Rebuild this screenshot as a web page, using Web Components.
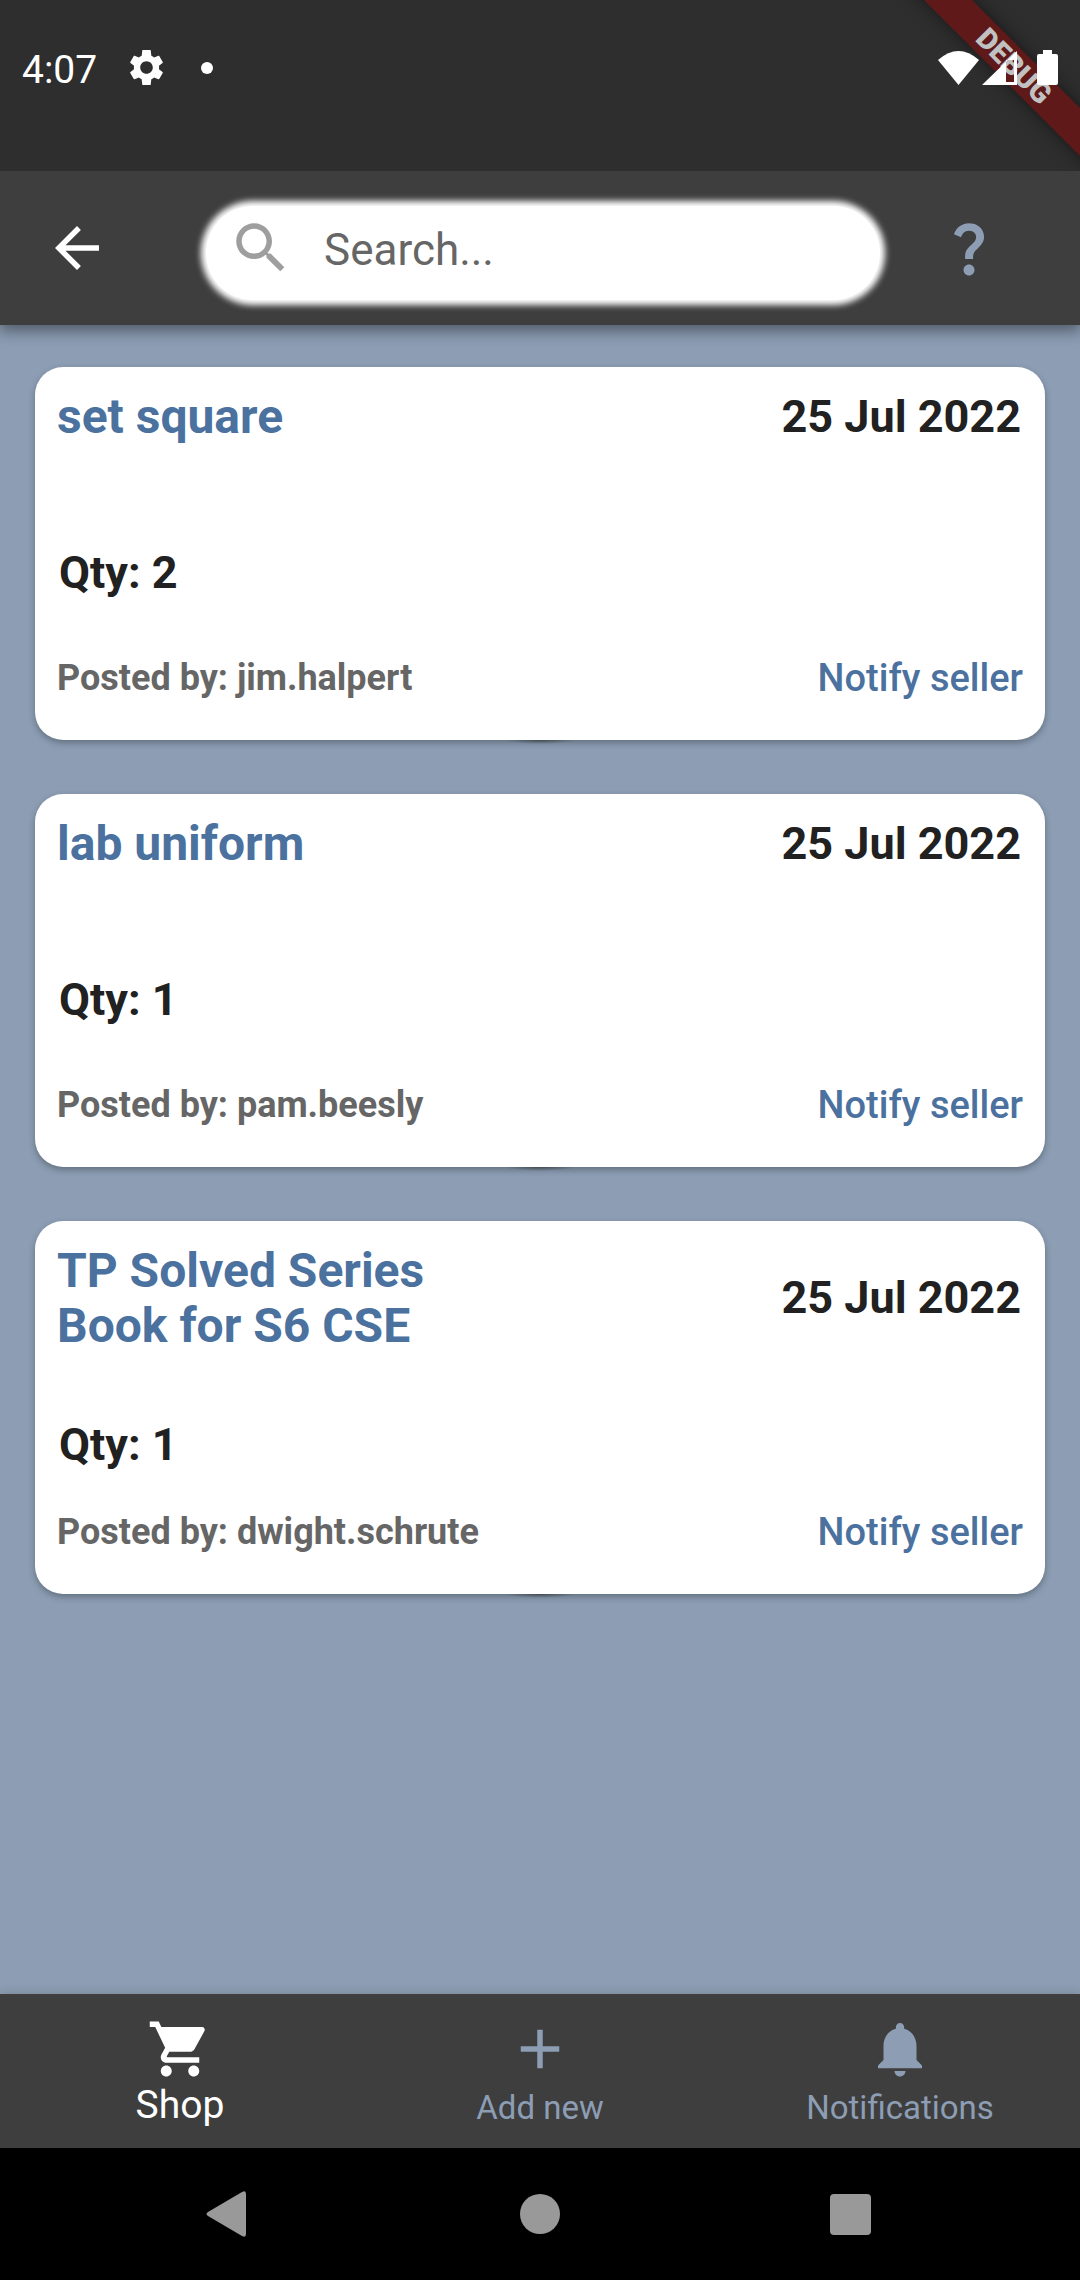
<!DOCTYPE html>
<html lang="en">
<head>
<meta charset="utf-8">
<meta name="viewport" content="width=device-width, initial-scale=1">
<title>Shop</title>
<style>
  html, body { margin: 0; height: 100%; }
  body { background: #8c9db4; font-family: Roboto, "Liberation Sans", sans-serif; color: #212121; }
</style>
</head>
<body>
<shop-app>
  <status-bar slot="status" time="4:07"></status-bar>
  <search-bar slot="header" placeholder="Search..."></search-bar>
  <item-card date="25 Jul 2022" qty="2" seller="jim.halpert">set square</item-card>
  <item-card date="25 Jul 2022" qty="1" seller="pam.beesly">lab uniform</item-card>
  <item-card date="25 Jul 2022" qty="1" seller="dwight.schrute">TP Solved Series Book for S6 CSE</item-card>
  <tab-bar slot="tabs">
    <tab-item icon="cart" active>Shop</tab-item>
    <tab-item icon="plus">Add new</tab-item>
    <tab-item icon="bell">Notifications</tab-item>
  </tab-bar>
  <system-nav slot="system"></system-nav>
</shop-app>
<script>
const ICONS = {
  back: '<path d="M20 11H7.83l5.59-5.59L12 4l-8 8 8 8 1.41-1.41L7.83 13H20v-2z"/>',
  search: '<path d="M15.5 14h-.79l-.28-.27C15.41 12.59 16 11.11 16 9.5 16 5.91 13.09 3 9.5 3S3 5.91 3 9.5 5.91 16 9.5 16c1.61 0 3.09-.59 4.23-1.57l.27.28v.79l5 4.99L20.49 19l-4.99-5zm-6 0C7.01 14 5 11.99 5 9.5S7.01 5 9.5 5 14 7.01 14 9.5 11.99 14 9.5 14z"/>',
  help: '<path d="M11.07 12.85c.77-1.39 2.25-2.21 3.11-3.44.91-1.29.4-3.7-2.18-3.7-1.69 0-2.52 1.28-2.87 2.34L6.54 6.96C7.25 4.83 9.18 3 11.99 3c2.35 0 3.96 1.07 4.78 2.41.7 1.15 1.11 3.3.03 4.9-1.2 1.77-2.35 2.31-2.97 3.45-.25.46-.35.76-.35 2.24h-2.89c-.01-.78-.13-2.05.48-3.15zM14 20c0 1.1-.9 2-2 2s-2-.9-2-2 .9-2 2-2 2 .9 2 2z"/>',
  cart: '<path d="M7 18c-1.1 0-1.99.9-1.99 2S5.9 22 7 22s2-.9 2-2-.9-2-2-2zM1 2v2h2l3.6 7.59-1.35 2.45c-.16.28-.25.61-.25.96 0 1.1.9 2 2 2h12v-2H7.42c-.14 0-.25-.11-.25-.25l.03-.12.9-1.63h7.45c.75 0 1.41-.41 1.75-1.03l3.58-6.49c.08-.14.12-.31.12-.48 0-.55-.45-1-1-1H5.21l-.94-2H1zm16 16c-1.1 0-1.99.9-1.99 2s.89 2 1.99 2 2-.9 2-2-.9-2-2-2z"/>',
  plus: '<path d="M19 13h-6v6h-2v-6H5v-2h6V5h2v6h6v2z"/>',
  bell: '<path d="M12 22c1.1 0 2-.9 2-2h-4c0 1.1.89 2 2 2zm6-6v-5c0-3.07-1.64-5.64-4.5-6.32V4c0-.83-.67-1.5-1.5-1.5s-1.5.67-1.5 1.5v.68C7.63 5.36 6 7.92 6 11v5l-2 2v1h16v-1l-2-2z"/>',
  gear: '<path d="M19.14 12.94c.04-.3.06-.61.06-.94 0-.32-.02-.64-.07-.94l2.03-1.58c.18-.14.23-.41.12-.61l-1.92-3.32c-.12-.22-.37-.29-.59-.22l-2.39.96c-.5-.38-1.03-.7-1.62-.94L14.4 2.2c-.04-.24-.24-.2-.48-.2h-3.84c-.24 0-.43-.04-.47.2l-.36 3.15c-.59.24-1.13.57-1.62.94l-2.39-.96c-.22-.08-.47 0-.59.22L2.74 8.87c-.12.21-.08.47.12.61l2.03 1.58c-.05.3-.09.63-.09.94s.02.64.07.94l-2.03 1.58c-.18.14-.23.41-.12.61l1.92 3.32c.12.22.37.29.59.22l2.39-.96c.5.38 1.03.7 1.62.94l.36 3.15c.05.24.24.2.48.2h3.84c.24 0 .44.04.47-.2l.36-3.15c.59-.24 1.13-.56 1.62-.94l2.39.96c.22.08.47 0 .59-.22l1.92-3.32c.12-.22.07-.47-.12-.61l-2.01-1.58zM12 15.6c-1.98 0-3.6-1.62-3.6-3.6s1.62-3.6 3.6-3.6 3.6 1.62 3.6 3.6-1.62 3.6-3.6 3.6z"/>'
};
const icon = (name) => `<svg class="icon" viewBox="0 0 24 24" fill="currentColor" aria-hidden="true">${ICONS[name]}</svg>`;
const BASE = `
  :host, * { box-sizing: border-box; }
  .icon { display: block; width: 66px; height: 66px; flex: none; }
  button { font: inherit; color: inherit; background: none; border: 0; padding: 0; margin: 0; cursor: pointer; }
`;

class Base extends HTMLElement {
  connectedCallback() {
    if (!this.shadowRoot) this.attachShadow({ mode: 'open' }).innerHTML = `<style>${BASE}${this.css()}</style>${this.html()}`;
  }
  attr(name) { return this.getAttribute(name) || ''; }
}

customElements.define('shop-app', class extends Base {
  css() { return `
    :host { display: flex; flex-direction: column; min-height: 100vh; }
    .top { z-index: 1; box-shadow: 0 5px 14px 1px rgba(0,0,0,.42); }
    main { flex: 1; display: flex; flex-direction: column; gap: 54px; padding: 42px 35px; }
    .bottom { box-shadow: 0 0 10px rgba(60,80,60,.3); }
  `; }
  html() { return `
    <div class="top"><slot name="status"></slot><slot name="header"></slot></div>
    <main><slot></slot></main>
    <div class="bottom"><slot name="tabs"></slot><slot name="system"></slot></div>
  `; }
});

customElements.define('status-bar', class extends Base {
  css() { return `
    :host { display: block; position: relative; height: 171px; background: #2e2e2e; color: #fff; overflow: hidden; }
    .row { position: relative; z-index: 1; display: flex; align-items: center; height: 135px; padding: 0 22px; }
    time { font-size: 39px; line-height: 46px; margin-right: 32px; padding-top: 4px; }
    .gear { width: 35px; height: 39px; }
    .dot { width: 12px; height: 12px; border-radius: 50%; background: #fff; margin-left: 37px; }
    .signals { display: flex; align-items: center; margin-left: auto; }
    svg { display: block; fill: #fff; }
    .cell { margin: 0 20px 0 3px; }
    /* Corner ribbon lying across the end of the status bar. */
    .ribbon { position: absolute; right: -134px; top: 49px; width: 400px; height: 34px; transform: rotate(45deg);
      background: #5f1919; color: #c1c1c1; font-size: 29px; line-height: 34px; font-weight: 900; text-align: center;
      box-shadow: 0 0 18px rgba(0,0,0,.5); }
  `; }
  html() { return `
    <div class="ribbon">DEBUG</div>
    <div class="row">
      <time>${this.attr('time')}</time>
      <svg class="gear" viewBox="2 1 20 22" aria-hidden="true">${ICONS.gear}</svg>
      <span class="dot"></span>
      <div class="signals">
        <svg width="41" height="34" viewBox="0 0 41 34" aria-hidden="true"><path d="M0 9Q20.5-9 41 9L20.5 34Z"/></svg>
        <svg class="cell" width="35" height="34" viewBox="0 0 35 34" aria-hidden="true"><path fill-rule="evenodd" d="M35 0V34H0ZM32 9H24V31H32Z"/></svg>
        <svg width="21" height="35" viewBox="0 0 21 35" aria-hidden="true"><path d="M6 0H15V4H19Q21 4 21 6V33Q21 35 19 35H2Q0 35 0 33V6Q0 4 2 4H6Z"/></svg>
      </div>
    </div>
  `; }
});

customElements.define('search-bar', class extends Base {
  css() { return `
    :host { display: flex; align-items: center; height: 154px; padding: 0 78px 0 44px; background: #3e3e3e; color: #fff; }
    .help { color: #8c9db4; }
    .pill { flex: 1; min-width: 0; display: flex; align-items: center; gap: 30px; height: 94px; margin: 9px 56px 0 96px; padding: 0 22px 9px;
      border-radius: 47px; background: #fff; box-shadow: 0 0 6px 5px #fff; color: #9e9e9e; }
    input { flex: 1; min-width: 0; border: 0; outline: 0; padding: 3px 0 0; background: none; font: 44px/52px Roboto, sans-serif; color: #212121; }
    input::placeholder { color: #666; opacity: 1; }
  `; }
  html() { return `
    <button type="button" aria-label="Back">${icon('back')}</button>
    <label class="pill">${icon('search')}<input type="text" aria-label="Search" placeholder="${this.attr('placeholder')}"></label>
    <button type="button" class="help" aria-label="Help">${icon('help')}</button>
  `; }
});

customElements.define('item-card', class extends Base {
  css() { return `
    :host { display: flex; flex-direction: column; position: relative; min-height: 373px; padding: 22px 22px 41px;
      border-radius: 28px; background: #fff; box-shadow: 0 3px 6px rgba(40,50,50,.4); }
    /* Darker contact shadow under the middle of the bottom edge. */
    :host::after { content: ""; position: absolute; left: 50%; top: 100%; width: 72px; height: 4px; margin-left: -36px;
      background: radial-gradient(ellipse at top, rgba(40,45,50,.6), rgba(40,45,50,0) 70%); }
    header, footer { display: flex; align-items: center; justify-content: space-between; }
    header { padding-right: 2px; }
    h2 { margin: 0; max-width: 46%; font-size: 48px; line-height: 55px; font-weight: 700; color: #4b719f; }
    .date, .qty { font-size: 45px; line-height: 52px; font-weight: 700; }
    .before { flex: 2; }
    .after { flex: 1; }
    .qty { margin: 0 2px 7px; }
    footer { height: 42px; }
    .seller { font-size: 36px; line-height: 42px; font-weight: 700; color: #666; }
    button { font-size: 38px; line-height: 42px; font-weight: 500; color: #4b719f; }
  `; }
  html() { return `
    <header><h2><slot></slot></h2><time class="date">${this.attr('date')}</time></header>
    <div class="before"></div>
    <div class="qty">Qty: ${this.attr('qty')}</div>
    <div class="after"></div>
    <footer><span class="seller">Posted by: ${this.attr('seller')}</span><button type="button">Notify seller</button></footer>
  `; }
});

customElements.define('tab-bar', class extends Base {
  css() { return `
    :host { display: block; background: #3e3e3e; }
    nav { display: flex; height: 154px; }
  `; }
  html() { return `<nav><slot></slot></nav>`; }
});

customElements.define('tab-item', class extends Base {
  css() { return `
    :host { flex: 1; display: block; }
    a { display: flex; flex-direction: column; align-items: center; padding-top: 22px; color: #8c9db4; text-decoration: none; }
    span { font-size: 33px; line-height: 52px; }
    :host([active]) a { color: #fff; }
    :host([active]) span { font-size: 39px; line-height: 46px; }
  `; }
  html() { return `<a href="#">${icon(this.attr('icon'))}<span><slot></slot></span></a>`; }
});

customElements.define('system-nav', class extends Base {
  css() { return `
    :host { display: flex; justify-content: center; gap: 245px; height: 132px; background: #000; align-items: center; }
    svg { display: block; fill: #999; }
  `; }
  html() { return `
    <button type="button" aria-label="Back"><svg width="66" height="66" viewBox="0 0 66 66"><path d="M12 31 46 11Q50 9 50 13V53Q50 57 46 55L12 35Q9 33 12 31Z"/></svg></button>
    <button type="button" aria-label="Home"><svg width="66" height="66" viewBox="0 0 66 66"><circle cx="33" cy="33" r="20"/></svg></button>
    <button type="button" aria-label="Recent apps"><svg width="66" height="66" viewBox="0 0 66 66"><rect x="12" y="13" width="41" height="41" rx="4"/></svg></button>
  `; }
});
</script>
</body>
</html>
